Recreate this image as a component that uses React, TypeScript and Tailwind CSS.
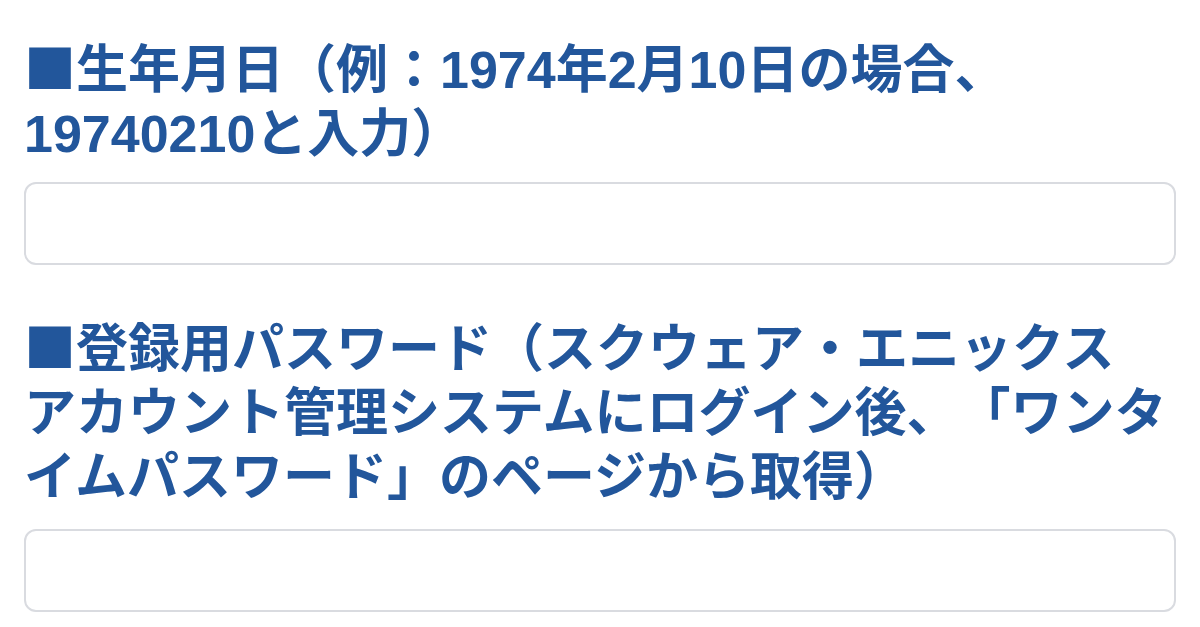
export default function App() {
  return (
    <main className="min-h-screen bg-white px-6 pt-[34px] font-['Liberation_Sans','Noto_Sans_CJK_JP',sans-serif] [text-spacing-trim:space-all]">
      {/* BIRTHDAY */}
      <label className="block text-[52px] font-bold leading-[64px] text-[#22569b]">
        <span className="font-['Noto_Sans_CJK_JP',sans-serif]">■</span>生年月日（例：1974年2月10日の場合、
        <br />
        19740210と入力）
      </label>
      <input
        type="text"
        className="mt-4 block h-[83px] w-full rounded-xl border-2 border-[#d9dbe0] bg-white px-4 text-4xl outline-none"
      />

      {/* ONE TIME PASSWORD */}
      <label className="mt-12 block text-[52px] font-bold leading-[64px] text-[#22569b]">
        <span className="font-['Noto_Sans_CJK_JP',sans-serif]">■</span>登録用パスワード（スクウェア・エニックス
        <br />
        アカウント管理システムにログイン後、「ワンタ
        <br />
        イムパスワード」のページから取得）
      </label>
      <input
        type="password"
        className="mt-5 block h-[83px] w-full rounded-xl border-2 border-[#d9dbe0] bg-white px-4 text-4xl outline-none"
      />
    </main>
  );
}
